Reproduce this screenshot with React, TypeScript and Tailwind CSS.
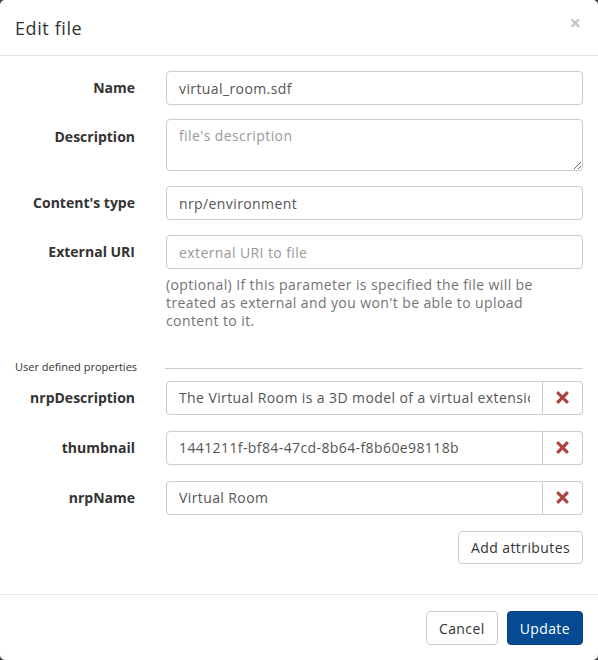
import React, { useState } from "react";

const FONT = { fontFamily: '"Open Sans", "Liberation Sans", sans-serif' };

type Prop = { key: string; value: string };

const RemoveIcon: React.FC = () => (
  <svg width="13" height="13" viewBox="0 0 14 14" aria-hidden="true">
    <path d="M2.5 2.5 L11.5 11.5 M11.5 2.5 L2.5 11.5" stroke="#a94442" strokeWidth="3.4" strokeLinecap="square" />
  </svg>
);

const FieldRow: React.FC<{ label: string; children: React.ReactNode }> = ({ label, children }) => (
  <div className="flex items-start">
    <label className="w-[120px] text-right text-[14px] font-bold text-[#333] pt-[6px]">{label}</label>
    <div className="ml-[31px] flex-1">{children}</div>
  </div>
);

const inputCls =
  "w-full h-[34px] border border-[#ccc] rounded-[4px] px-[12px] text-[14px] tracking-[0.4px] text-[#555] placeholder:text-[#999] focus:outline-none bg-white";

const App: React.FC = () => {
  const [name, setName] = useState("virtual_room.sdf");
  const [type, setType] = useState("nrp/environment");
  const [props, setProps] = useState<Prop[]>([
    { key: "nrpDescription", value: "The Virtual Room is a 3D model of a virtual extension of a room" },
    { key: "thumbnail", value: "1441211f-bf84-47cd-8b64-f8b60e98118b" },
    { key: "nrpName", value: "Virtual Room" },
  ]);

  return (
    <div className="w-[598px] h-[660px] bg-[#3a3a3a]" style={FONT}>
      <div className="w-full h-full bg-white rounded-[5px] flex flex-col">
        {/* Header */}
        <div className="flex items-center justify-between h-[56px] px-[15px] border-b border-[#e5e5e5]">
          <h4 className="text-[18px] tracking-[0.6px] text-[#333] pt-[2px]">Edit file</h4>
          <button className="text-[#c4c4c4] text-[20px] font-bold leading-none -mt-[10px] mr-[2px]">×</button>
        </div>

        {/* Body */}
        <div className="flex-1 px-[15px] pt-[15px]">
          <div className="flex flex-col gap-[15px]">
            <FieldRow label="Name">
              <input className={inputCls} value={name} onChange={(e) => setName(e.target.value)} />
            </FieldRow>
            <FieldRow label="Description">
              <textarea
                className="w-full h-[52px] -mt-[1px] border border-[#ccc] rounded-[4px] px-[12px] py-[5px] text-[14px] tracking-[0.4px] text-[#555] placeholder:text-[#999] focus:outline-none block"
                placeholder="file's description"
              />
            </FieldRow>
            <FieldRow label="Content's type">
              <input className={inputCls} value={type} onChange={(e) => setType(e.target.value)} />
            </FieldRow>
            <FieldRow label="External URI">
              <input className={inputCls} placeholder="external URI to file" />
              <p className="mt-[7px] pr-[40px] text-[14px] tracking-[0.4px] leading-[18px] text-[#737373]">
                (optional) If this parameter is specified the file will be treated as external and you won't be able
                to upload content to it.
              </p>
            </FieldRow>
          </div>

          {/* User defined properties */}
          <div className="flex items-center mt-[29px] mb-[5px]">
            <span className="text-[11px] text-[#333] w-[150px]">User defined properties</span>
            <div className="flex-1 border-t border-[#ccc] mt-[2px]" />
          </div>

          <div className="flex flex-col gap-[16px]">
            {props.map((p, i) => (
              <FieldRow key={p.key} label={p.key}>
                <div className="flex">
                  <input
                    className="flex-1 min-w-0 h-[34px] border border-[#ccc] rounded-l-[4px] px-[12px] text-[14px] tracking-[0.4px] text-[#555] focus:outline-none"
                    value={p.value}
                    onChange={(e) =>
                      setProps(props.map((q, j) => (j === i ? { ...q, value: e.target.value } : q)))
                    }
                  />
                  <button
                    className="w-[40px] h-[34px] border border-l-0 border-[#ccc] rounded-r-[4px] flex items-center justify-center bg-white"
                    onClick={() => setProps(props.filter((_, j) => j !== i))}
                  >
                    <RemoveIcon />
                  </button>
                </div>
              </FieldRow>
            ))}
          </div>

          <div className="flex justify-end mt-[16px]">
            <button className="h-[33px] px-[12px] border border-[#ccc] rounded-[4px] text-[14px] tracking-[0.4px] text-[#333] bg-white">
              Add attributes
            </button>
          </div>
        </div>

        {/* Footer */}
        <div className="flex justify-end gap-[9px] px-[15px] pt-[16px] pb-[15px] border-t border-[#e5e5e5]">
          <button className="h-[34px] px-[12px] border border-[#ccc] rounded-[4px] text-[14px] tracking-[0.4px] text-[#333] bg-white">
            Cancel
          </button>
          <button className="h-[34px] px-[12px] border border-[#0a4280] rounded-[4px] text-[14px] tracking-[0.4px] text-white bg-[#054b94]">
            Update
          </button>
        </div>
      </div>
    </div>
  );
};

export default App;
